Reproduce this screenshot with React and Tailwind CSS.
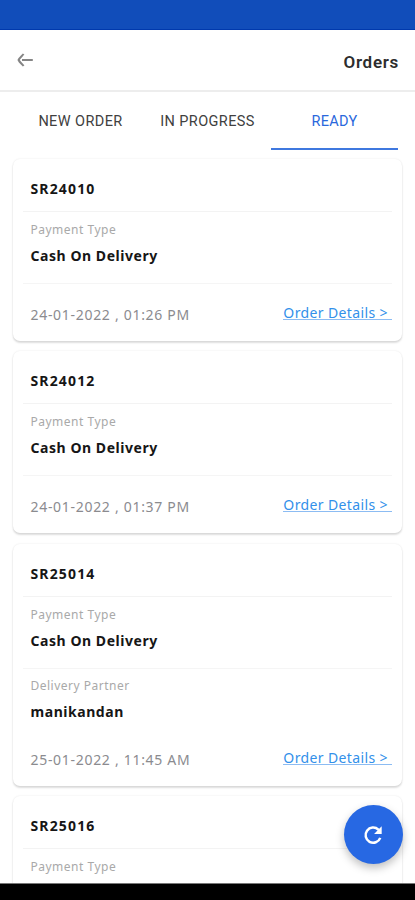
const TABS = ['NEW ORDER', 'IN PROGRESS', 'READY'];

const ORDERS = [
  { id: 'SR24010', payment: 'Cash On Delivery', placed: '24-01-2022 , 01:26 PM' },
  { id: 'SR24012', payment: 'Cash On Delivery', placed: '24-01-2022 , 01:37 PM' },
  { id: 'SR25014', payment: 'Cash On Delivery', partner: 'manikandan', placed: '25-01-2022 , 11:45 AM' },
  { id: 'SR25016' },
];

function BackArrow() {
  return (
    <svg width="16" height="14" viewBox="0 0 16 14" fill="none" stroke="#858585" strokeWidth="2">
      <path d="M6.6 1C5.2 2.8 2.6 4.6 1.6 7c1 2.4 3.6 4.2 5 6" />
      <path d="M5 7h10.8" />
    </svg>
  );
}

function RefreshIcon() {
  return (
    <svg width="26" height="26" viewBox="0 0 24 24" fill="none" stroke="white" strokeWidth="2.3">
      <path d="M18.7 14.6A7 7 0 1 1 17 7.1l1 1" />
      <path d="M20 4v7h-7z" fill="white" stroke="none" />
    </svg>
  );
}

function Field({ label, value }) {
  return (
    <>
      <div className="h-[18px] pl-[7.5px] text-[12px] leading-[18px] tracking-[0.5px] text-[#a9a9a9]">{label}</div>
      {value && (
        <div className="mt-[7px] h-5 pl-[7.5px] text-[14px] leading-5 font-bold tracking-[0.55px] text-[#161616]">
          {value}
        </div>
      )}
    </>
  );
}

function OrderCard({ order }) {
  return (
    <div className="mb-[10.3px] min-h-[182px] shrink-0 rounded-[7px] bg-white px-2.5 pt-5 shadow-[0_2px_2px_rgba(0,0,0,0.13),0_0_2px_rgba(0,0,0,0.1)]">
      <div className="h-5 pl-[7.5px] text-[14px] leading-5 font-bold tracking-[1.15px] text-[#161616]">{order.id}</div>
      <div className="mt-3 border-t border-[#f3f3f3] pt-[9px]">
        <Field label="Payment Type" value={order.payment} />
      </div>
      {order.placed && (
        <div className="mt-[17px] border-t border-[#f5f5f5]">
          {order.partner && (
            <div className="-mb-[10px] pt-2">
              <Field label="Delivery Partner" value={order.partner} />
              <div className="h-[17px]" />
            </div>
          )}
          <div className="flex h-[57px] items-start justify-between pt-5">
            <span className="mt-px pl-[7.5px] text-[14px] leading-5 tracking-[0.7px] text-[#8b8b8f]">
              {order.placed}
            </span>
            <a className="mt-[2px] border-b border-[#8cbcf3] text-[14px] leading-[13px] tracking-[0.38px] whitespace-pre text-[#3290ea]">
              {'Order Details > '}
            </a>
          </div>
        </div>
      )}
    </div>
  );
}

export default function App() {
  return (
    <div className="relative flex h-[900px] w-[415px] flex-col overflow-hidden bg-white font-['Noto_Sans',sans-serif]">
      <div className="h-[30px] shrink-0 border-b border-[#0039ad] bg-[#114dba]" />
      <header className="flex h-[62px] shrink-0 items-center justify-between border-b-2 border-[#ededed] px-[17px]">
        <BackArrow />
        <h1 className="-mr-px pt-1.5 font-[Roboto,sans-serif] text-[17px] font-semibold tracking-[0.7px] text-[#2d2d2d]">
          Orders
        </h1>
      </header>

      <nav className="mx-[17px] flex h-[58px] shrink-0 font-[Roboto,sans-serif] text-[14.5px]">
        {TABS.map((tab) => (
          <div
            key={tab}
            className={
              tab === 'READY'
                ? 'flex flex-1 items-center justify-center border-b-2 border-[#3f78df] pt-1 tracking-[0.3px] text-[#2a68dc]'
                : 'flex flex-1 items-center justify-center border-b-2 border-transparent pt-1 tracking-[0.4px] text-[#404040]'
            }
          >
            {tab}
          </div>
        ))}
      </nav>

      <main className="flex min-h-0 flex-1 flex-col overflow-hidden px-[13px] pt-[9px]">
        {ORDERS.map((order) => (
          <OrderCard key={order.id} order={order} />
        ))}
      </main>

      <button className="absolute top-[805px] left-[343.5px] flex h-[59px] w-[59px] items-center justify-center rounded-full bg-[#2768e3] text-white shadow-[0_4px_8px_rgba(0,0,0,0.25)]">
        <RefreshIcon />
      </button>
      <div className="h-[17px] shrink-0 border-t border-[#777777] bg-black" />
    </div>
  );
}
